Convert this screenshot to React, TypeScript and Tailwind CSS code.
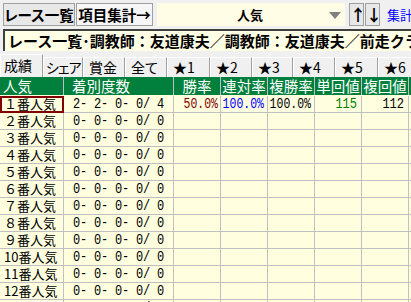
const rows = [
  '１番人気', '２番人気', '３番人気', '４番人気', '５番人気', '６番人気',
  '７番人気', '８番人気', '９番人気', '10番人気', '11番人気', '12番人気', '13番人気',
]

const tabs = ['成績', 'シェア', '賞金', '全て', '★1', '★2', '★3', '★4', '★5', '★6']
const tabWidths = ['w-[43px]', 'w-[40px]', 'w-[42px]', 'w-[42px]', 'w-[43px]', 'w-[42px]', 'w-[41px]', 'w-[42px]', 'w-[43px]', 'w-[42px]']

const heads = ['連対率', '複勝率', '単回値', '複回値', '']

function Cell({ w, children, className = '' }: { w: string; children?: React.ReactNode; className?: string }) {
  return (
    <div className={`${w} flex-none h-[17px] border-r border-b border-[#c0c0c0] leading-[16px] overflow-hidden whitespace-nowrap ${className}`}>
      {children}
    </div>
  )
}

function Num({ children }: { children: React.ReactNode }) {
  return <span className="inline-block scale-y-[1.2] origin-center">{children}</span>
}

export default function App() {
  return (
    <div className="w-[411px] h-[302px] overflow-hidden bg-[#f0f0f0] font-['Noto_Sans_CJK_JP',sans-serif] text-black">
      {/* top bar */}
      <div className="h-[29px] flex items-start pt-[3px] pl-[3px] whitespace-nowrap [font-feature-settings:'palt']">
        <button className="w-[72px] h-[23px] flex-none border border-[#a0a0a0] bg-[#e8e8e8] text-[14.5px] font-bold leading-[21px] text-center">
          レース一覧
        </button>
        <button className="ml-[1px] w-[77px] h-[23px] flex-none border border-[#a0a0a0] bg-[#f6f6f6] text-[14.5px] font-bold leading-[21px] text-center">
          項目集計→
        </button>
        <div className="ml-[4px] w-[188px] h-[23px] flex-none bg-[#fffde6] flex items-center relative">
          <span className="w-full text-center text-[13px] font-bold leading-[21px] pr-[2px]">人気</span>
          <svg className="absolute left-[172px] top-[9px]" width="12" height="7" viewBox="0 0 12 7">
            <path d="M0 0 H12 L6 7 Z" fill="#808080" />
          </svg>
        </div>
        <button className="ml-[4px] w-[15px] h-[23px] flex-none border border-[#a0a0a0] bg-[#e8e8e8] text-[16px] font-bold leading-[21px] text-center">
          ↑
        </button>
        <button className="ml-[1px] w-[15px] h-[23px] flex-none border border-[#a0a0a0] bg-[#e8e8e8] text-[16px] font-bold leading-[21px] text-center">
          ↓
        </button>
        <span className="ml-[7px] text-[13px] leading-[23px] text-[#0000ff]">集計</span>
      </div>

      {/* title */}
      <div className="ml-[3px] w-[420px] h-[22px] border-t-2 border-l-2 border-[#404040] bg-[#ffffe6] pl-[3px] text-[15px] font-bold leading-[19px] whitespace-nowrap overflow-hidden">
        レース一覧･調教師：友道康夫／調教師：友道康夫／前走クラス
      </div>

      {/* tabs */}
      <div className="mt-[3px] h-[23px] flex items-end whitespace-nowrap [font-feature-settings:'palt']">
        {tabs.map((t, i) => (
          <div
            key={t}
            className={`${tabWidths[i]} flex-none text-[14px] border-t border-l border-white border-r border-r-[#a0a0a0] bg-[#f0f0f0] ${
              i === 0
                ? 'h-[23px] leading-[20px] pl-[3px]'
                : i === 1
                  ? 'h-[20px] leading-[19px] pl-[2px] text-[13px] tracking-[-1px]'
                  : 'h-[20px] leading-[19px] pl-[5px]'
            }`}
          >
            {t}
          </div>
        ))}
      </div>

      {/* table */}
      <div className="bg-[#ffffe0] text-[13px]">
        <div className="flex h-[18px] bg-[#00803c] text-white text-[14.5px] whitespace-nowrap">
          <div className="w-[64px] flex-none border-r border-[#c0c0c0] pl-[3px] leading-[17px]">人気</div>
          <div className="w-[110px] flex-none border-r border-[#c0c0c0] pl-[8px] leading-[17px]">着別度数</div>
          <div className="w-[47px] flex-none border-r border-[#c0c0c0] text-center leading-[17px]">勝率</div>
          {heads.map((h, i) => (
            <div key={i} className="w-[47px] flex-none border-r border-[#c0c0c0] text-center leading-[17px]">
              {h}
            </div>
          ))}
        </div>
        <div className="h-[1px]" />
        {rows.map((r, i) => (
          <div key={r} className="flex">
            <Cell w="w-[64px]" className={`pl-[4px] ${i === 0 ? 'outline-2 -outline-offset-2 outline-[#800000]' : ''}`}>
              {r}
            </Cell>
            <Cell w="w-[110px]" className="text-right pr-[9px] font-['Liberation_Mono',monospace] text-[12px] tracking-[-0.2px]">
              <Num>{i === 0 ? '2- 2- 0- 0/ 4' : '0- 0- 0- 0/ 0'}</Num>
            </Cell>
            <Cell w="w-[47px]" className="text-right pr-[2px] font-['Liberation_Mono',monospace] text-[11.5px] text-[#800000]">
              {i === 0 && <Num>50.0%</Num>}
            </Cell>
            <Cell w="w-[47px]" className="text-right pr-[3px] font-['Liberation_Mono',monospace] text-[11.5px] text-[#0000ff]">
              {i === 0 && <Num>100.0%</Num>}
            </Cell>
            <Cell w="w-[47px]" className="text-right pr-[3px] font-['Liberation_Mono',monospace] text-[11.5px]">
              {i === 0 && <Num>100.0%</Num>}
            </Cell>
            <Cell w="w-[47px]" className="text-right pr-[4px] font-['Liberation_Mono',monospace] text-[12px] text-[#008000]">
              {i === 0 && <Num>115</Num>}
            </Cell>
            <Cell w="w-[47px]" className="text-right pr-[4px] font-['Liberation_Mono',monospace] text-[12px]">
              {i === 0 && <Num>112</Num>}
            </Cell>
            <Cell w="w-[47px]" />
          </div>
        ))}
      </div>
    </div>
  )
}
